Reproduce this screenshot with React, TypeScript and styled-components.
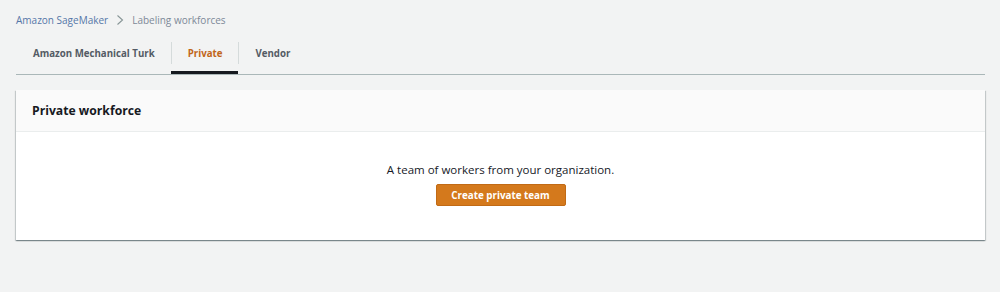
import styled, {createGlobalStyle} from "styled-components";

const GlobalStyle = createGlobalStyle`
  html, body {
    margin: 0;
    padding: 0;
    background: #f2f3f3;
    font-family: "Open Sans", "Liberation Sans", sans-serif;
    color: #16191f;
  }
`;

const Page = styled.div`
  width: 1000px;
  height: 292px;
  padding: 11px 15px 0 16px;
  box-sizing: border-box;
`;

const Crumbs = styled.nav`
  display: flex;
  align-items: center;
  gap: 5px;
  font-size: 10px;
  height: 18px;
`;
const CrumbLink = styled.span`
  color: #5577a8;
`;
const CrumbCurrent = styled.span`
  color: #7d8998;
`;
const Chevron = styled.svg`
  width: 10px;
  height: 12px;
  margin: 0 2px;
`;

const Tabs = styled.div`
  display: flex;
  margin-top: 5px;
  height: 40px;
  border-bottom: 1px solid #aab7b8;
`;
const Tab = styled.div<{$active?: boolean}>`
  position: relative;
  padding-top: 8px;
  &::after {
    content: "";
    display: ${(p) => (p.$active ? "block" : "none")};
    position: absolute;
    left: 0;
    right: 0;
    bottom: 0;
    height: 3px;
    background: #16191f;
  }
`;
const TabLabel = styled.div<{$active?: boolean; $sep?: boolean}>`
  display: flex;
  align-items: center;
  height: 22px;
  padding: 0 16px;
  font-size: 9.7px;
  font-weight: 700;
  color: ${(p) => (p.$active ? "#c1661a" : "#545b64")};
  border-left: 1px solid ${(p) => (p.$sep ? "#d5dbdb" : "transparent")};
`;

const Panel = styled.section`
  margin-top: 15px;
  width: 969px;
  background: #ffffff;
  box-shadow: 0 1px 1px 0 rgba(0, 28, 36, 0.3), 1px 1px 1px 0 rgba(0, 28, 36, 0.15),
    -1px 1px 1px 0 rgba(0, 28, 36, 0.15);
`;
const PanelHeader = styled.header`
  height: 42px;
  display: flex;
  align-items: center;
  padding: 0 16px;
  background: #fafafa;
  border-bottom: 1px solid #eaeded;
  box-sizing: border-box;
`;
const PanelTitle = styled.h2`
  margin: 0;
  font-size: 12.2px;
  font-weight: 700;
`;
const PanelBody = styled.div`
  height: 108px;
  display: flex;
  flex-direction: column;
  align-items: center;
  padding-top: 30px;
  box-sizing: border-box;
`;
const Desc = styled.p`
  margin: 0;
  font-size: 11.5px;
  color: #16191f;
`;
const Primary = styled.button`
  margin-top: 7px;
  width: 130px;
  height: 22px;
  border: 1px solid #c16a15;
  background: #d4791c;
  color: #fff;
  font-family: inherit;
  font-weight: 700;
  font-size: 9.8px;
  border-radius: 2px;
  padding: 0;
`;

export default function App() {
  return (
    <>
      <GlobalStyle />
      <Page>
        <Crumbs>
          <CrumbLink>Amazon SageMaker</CrumbLink>
          <Chevron viewBox="0 0 10 12">
            <path d="M2.5 1.5l5 4.5-5 4.5" fill="none" stroke="#879596" strokeWidth="1.1" />
          </Chevron>
          <CrumbCurrent>Labeling workforces</CrumbCurrent>
        </Crumbs>
        <Tabs>
          <Tab>
            <TabLabel>Amazon Mechanical Turk</TabLabel>
          </Tab>
          <Tab $active>
            <TabLabel $active $sep>Private</TabLabel>
          </Tab>
          <Tab>
            <TabLabel $sep>Vendor</TabLabel>
          </Tab>
        </Tabs>
        <Panel>
          <PanelHeader>
            <PanelTitle>Private workforce</PanelTitle>
          </PanelHeader>
          <PanelBody>
            <Desc>A team of workers from your organization.</Desc>
            <Primary>Create private team</Primary>
          </PanelBody>
        </Panel>
      </Page>
    </>
  );
}
